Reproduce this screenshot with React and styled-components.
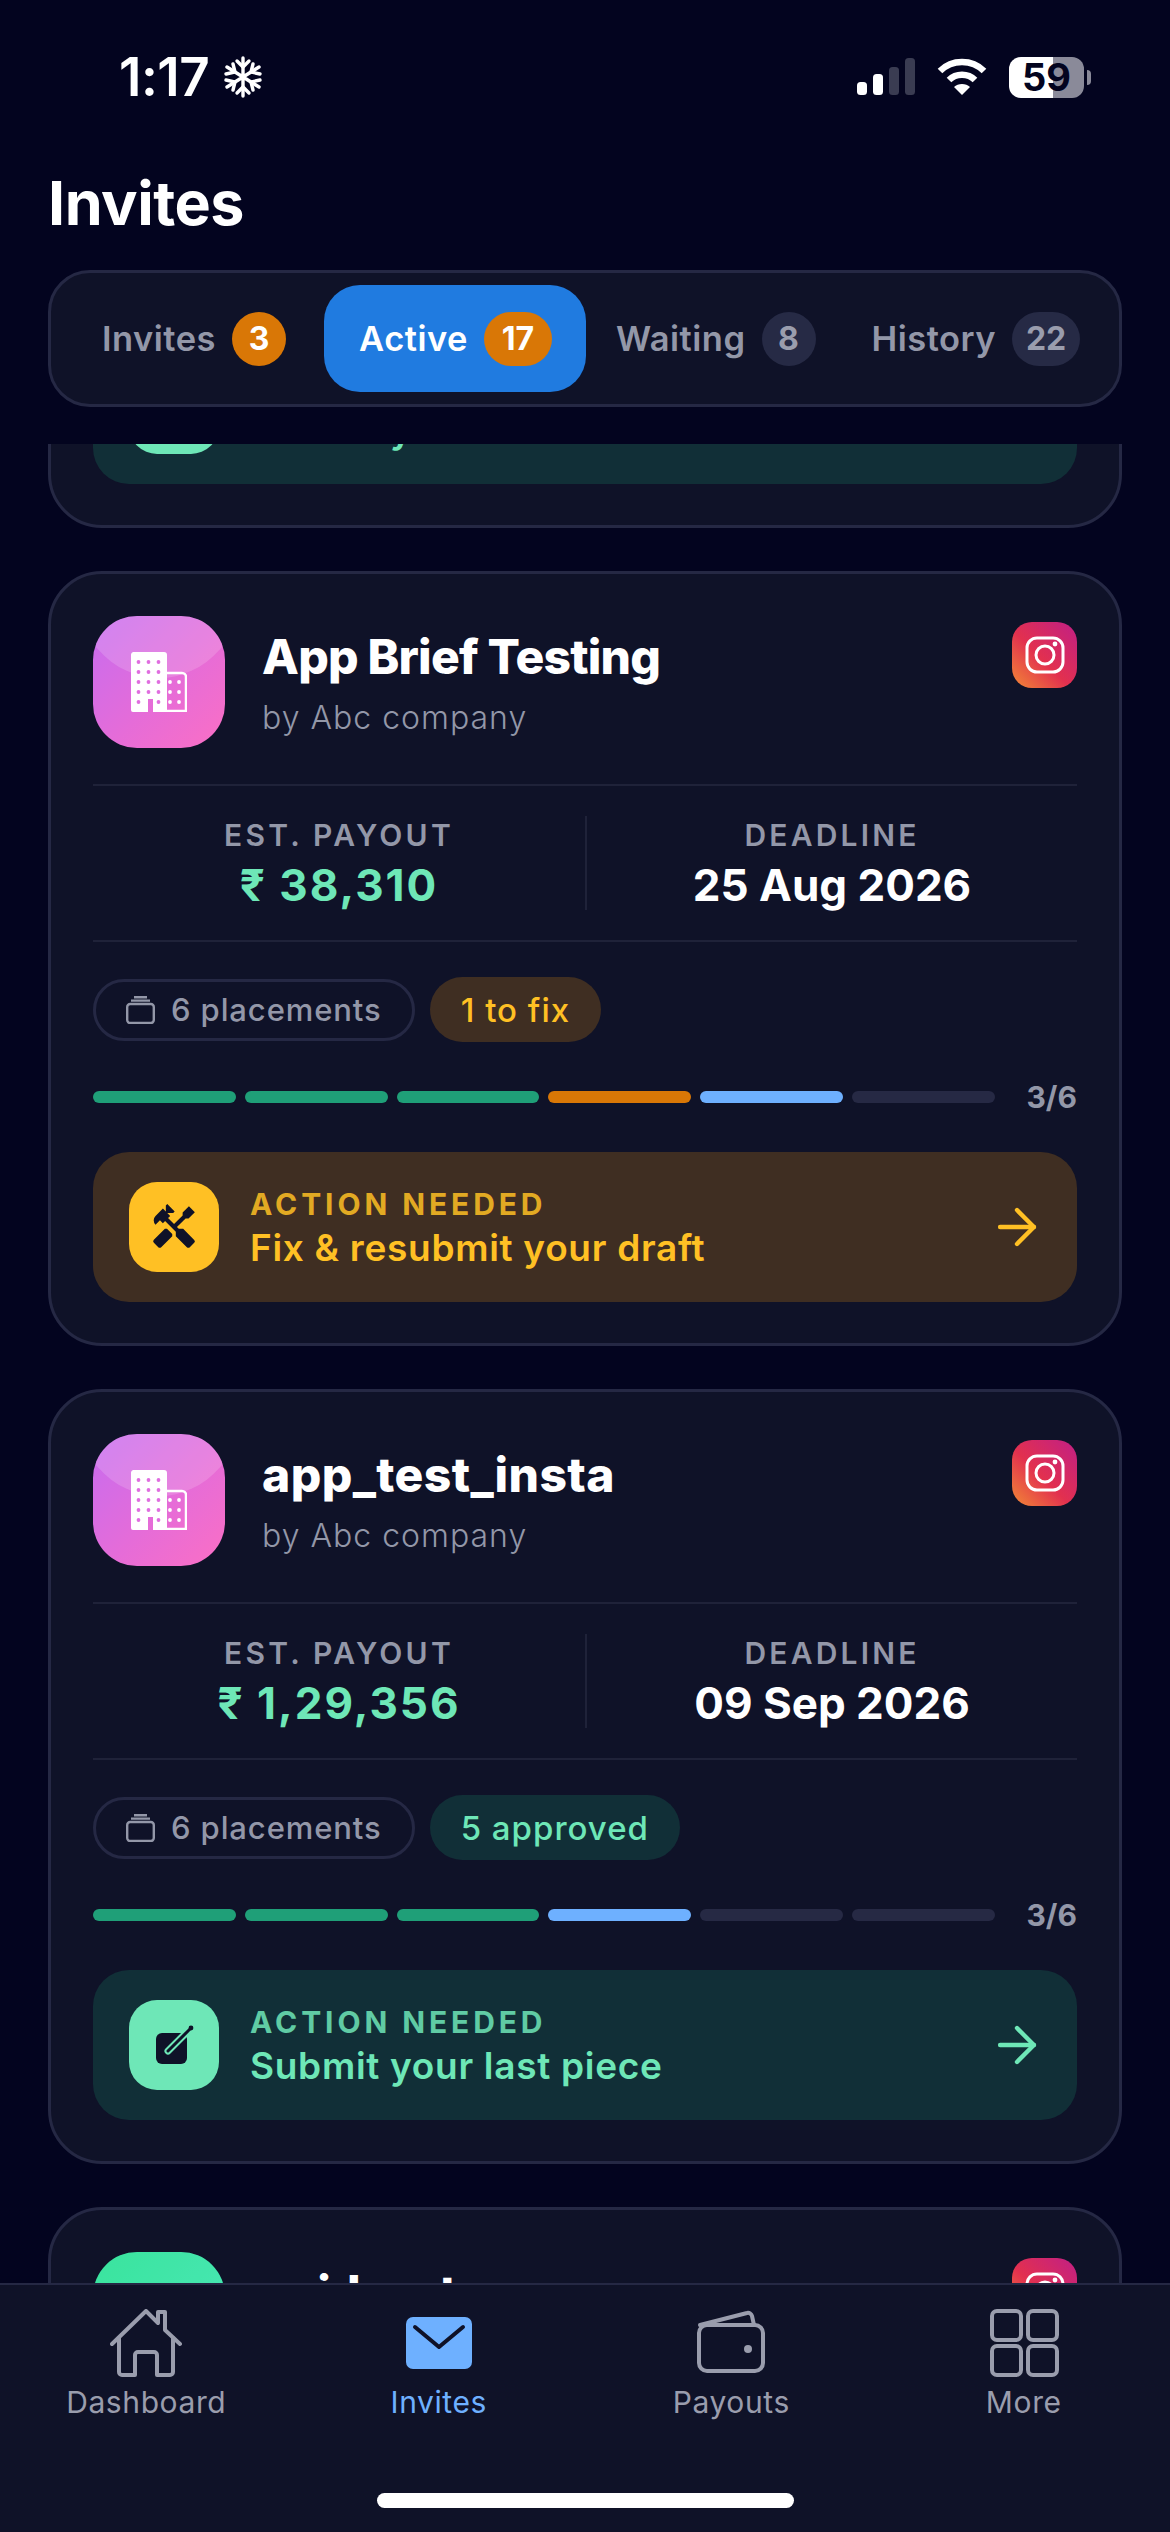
import React from 'react';
import styled, { createGlobalStyle } from 'styled-components';
import { MdHandyman } from 'react-icons/md';
import { ArrowRight } from 'lucide-react';

const GlobalStyle = createGlobalStyle`
  html, body {
    margin: 0;
    padding: 0;
    background: #03041f;
  }
  * {
    box-sizing: border-box;
  }
`;

const Screen = styled.div`
  width: 1170px;
  height: 2532px;
  display: flex;
  flex-direction: column;
  position: relative;
  overflow: hidden;
  background: #03041f;
  color: #fff;
  font-family: Inter, 'Noto Sans', sans-serif;
`;

const Header = styled.header`
  flex: none;
  height: 444px;
  padding: 0 48px;
`;

const StatusBar = styled.div`
  height: 154px;
  margin: 0 -48px;
  padding: 0 86px 0 119px;
  display: flex;
  align-items: center;
  justify-content: space-between;
`;

const Clock = styled.div`
  display: flex;
  align-items: center;
  gap: 15px;
  font-size: 53px;
  font-weight: 600;
  letter-spacing: -0.5px;
`;

const StatusIcons = styled.div`
  display: flex;
  align-items: center;
  gap: 22px;
`;

const Battery = styled.div`
  width: 75px;
  height: 41px;
  border-radius: 12px;
  display: flex;
  align-items: center;
  justify-content: center;
  position: relative;
  background: linear-gradient(90deg, #fff 0 44px, #8a8a99 44px);
  color: #03041f;
  font-size: 38px;
  font-weight: 700;

  &::after {
    content: '';
    position: absolute;
    right: -7px;
    top: 13px;
    width: 4px;
    height: 15px;
    border-radius: 0 4px 4px 0;
    background: #8a8a99;
  }
`;

const Title = styled.h1`
  margin: 0 0 20px;
  height: 96px;
  padding-top: 1px;
  line-height: 96px;
  font-size: 61px;
  font-weight: 700;
  letter-spacing: -0.5px;
`;

const Tabs = styled.nav`
  height: 137px;
  padding: 12px 0 12px 30px;
  display: flex;
  align-items: stretch;
  gap: 14px;
  border: 3px solid #252844;
  border-radius: 42px;
  background: #0f1228;
`;

const Tab = styled.div`
  display: flex;
  align-items: center;
  gap: 16px;
  margin: ${(p) => (p.$active ? '0 -5px 0 3px' : '0')};
  padding: ${(p) => (p.$active ? '0 34px 0 35px' : '0 21px')};
  border-radius: 36px;
  background: ${(p) => (p.$active ? '#207be0' : 'transparent')};
  color: ${(p) => (p.$active ? '#fff' : '#9397a8')};
  font-size: 34.5px;
  font-weight: 600;
  letter-spacing: 0.5px;
`;

const Count = styled.span`
  width: ${(p) => (p.$wide ? '68px' : '54px')};
  height: 54px;
  border-radius: 27px;
  display: flex;
  align-items: center;
  justify-content: center;
  font-size: 32px;
  font-weight: 700;
  letter-spacing: 0;
  background: ${(p) => (p.$alert ? '#d97706' : '#262a45')};
  color: ${(p) => (p.$alert ? '#fff' : '#9a9dad')};
`;

const Viewport = styled.main`
  flex: 1;
  min-height: 0;
  overflow: hidden;
  padding: 0 48px;
`;

// scrolled list, first card sits mostly above the fold
const CardList = styled.div`
  margin-top: -691px;
  display: flex;
  flex-direction: column;
  gap: 43px;
`;

const Card = styled.article`
  height: 775px;
  padding: 42px 42px 41px;
  border: 3px solid #252844;
  border-radius: 54px;
  background: #0f1228;
`;

const CardTop = styled.div`
  display: flex;
  align-items: flex-start;
  gap: 37px;
  height: 132px;
  margin-bottom: 36px;
`;

const BrandIcon = styled.div`
  flex: none;
  width: 132px;
  height: 132px;
  border-radius: 44px;
  position: relative;
  overflow: hidden;
  display: flex;
  align-items: center;
  justify-content: center;
  background: ${(p) => p.$bg};

  &::before {
    content: '';
    position: absolute;
    left: -20px;
    right: -20px;
    top: -132px;
    height: 194px;
    border-radius: 50%;
    background: rgba(255, 255, 255, 0.16);
  }

  svg {
    position: relative;
  }
`;

const Names = styled.div`
  flex: 1;
  padding-top: 11px;
`;

const CardTitle = styled.h2`
  margin: 0 0 10px;
  font-size: 48px;
  line-height: 60px;
  font-weight: 800;
  letter-spacing: ${(p) => p.$tracking || '-0.8px'};
  color: #fff;
`;

const Byline = styled.div`
  font-size: 32px;
  line-height: 42px;
  font-weight: 300;
  letter-spacing: 1px;
  color: #9397a8;
`;

const PlatformBadge = styled.div`
  flex: none;
  width: 65px;
  height: 66px;
  margin-top: 6px;
  border-radius: 20px;
  display: flex;
  align-items: center;
  justify-content: center;
  background: linear-gradient(45deg, #f28a35 0%, #e2304f 45%, #c11f86 100%);
`;

const Stats = styled.div`
  height: 158px;
  display: grid;
  grid-template-columns: 1fr 1fr;
  align-items: center;
  border-top: 2px solid #1f2239;
  border-bottom: 2px solid #1f2239;
`;

const Stat = styled.div`
  height: 94px;
  padding-top: 2px;
  display: flex;
  flex-direction: column;
  align-items: center;
  justify-content: center;
  gap: 4px;
  border-left: ${(p) => (p.$split ? '2px solid #1f2239' : 'none')};
`;

const StatLabel = styled.div`
  font-size: 30px;
  line-height: 38px;
  font-weight: 600;
  letter-spacing: 3.2px;
  color: #9397a8;
`;

const StatValue = styled.div`
  font-size: 44px;
  line-height: 54px;
  font-weight: 700;
  letter-spacing: ${(p) => (p.$money ? '2px' : '0')};
  color: ${(p) => (p.$money ? '#6ee7b7' : '#fff')};
`;

const Chips = styled.div`
  display: flex;
  align-items: center;
  gap: 15px;
  height: 65px;
  margin: 35px 0 49px;
`;

const Chip = styled.div`
  height: ${(p) => (p.$outline ? '62px' : '65px')};
  padding: ${(p) => (p.$outline ? '0 30px' : '0 31px')};
  display: flex;
  align-items: center;
  gap: 16px;
  border-radius: 33px;
  border: ${(p) => (p.$outline ? '3px solid #252844' : 'none')};
  background: ${(p) => (p.$outline ? 'transparent' : p.$bg)};
  color: ${(p) => (p.$outline ? '#9397a8' : p.$fg)};
  font-size: ${(p) => (p.$outline ? '31px' : '33px')};
  font-weight: 500;
  letter-spacing: ${(p) => (p.$outline ? '0.9px' : '1px')};
`;

const Progress = styled.div`
  height: 12px;
  display: flex;
  align-items: center;
  margin-bottom: 49px;
`;

const Segments = styled.div`
  flex: 1;
  display: flex;
  gap: 9px;
`;

const Segment = styled.span`
  flex: 1;
  height: 12px;
  border-radius: 6px;
  background: ${(p) => p.$color};
`;

const ProgressLabel = styled.span`
  margin-left: 32px;
  font-size: 30px;
  font-weight: 700;
  color: #9397a8;
`;

const Action = styled.div`
  height: 150px;
  padding: 0 31px 0 36px;
  display: flex;
  align-items: center;
  gap: 31px;
  border-radius: 36px;
  background: ${(p) => p.$bg};
  color: ${(p) => p.$fg};
`;

const ActionIcon = styled.div`
  flex: none;
  width: 90px;
  height: 90px;
  border-radius: 28px;
  display: flex;
  align-items: center;
  justify-content: center;
  background: ${(p) => p.$fg};
  color: #0f1228;
`;

// hammer head on the left, wrench on the right
const ToolsIcon = styled(MdHandyman)`
  transform: scaleX(-1);
`;

const ActionText = styled.div`
  flex: 1;
`;

const ActionLabel = styled.div`
  font-size: 30px;
  line-height: 40px;
  font-weight: 700;
  letter-spacing: 3.9px;
  opacity: 0.85;
`;

const ActionTitle = styled.div`
  margin-top: 1px;
  font-size: 37px;
  line-height: 46px;
  font-weight: 600;
  letter-spacing: 0.7px;
`;

const BottomNav = styled.nav`
  flex: none;
  height: 249px;
  padding-top: 24px;
  display: grid;
  grid-template-columns: repeat(4, 1fr);
  align-items: start;
  border-top: 2px solid #252844;
  background: #0f1228;
`;

const NavItem = styled.div`
  display: flex;
  flex-direction: column;
  align-items: center;
  gap: 5px;
  color: ${(p) => (p.$active ? '#6eb0ff' : '#9a9dad')};
  font-size: 30px;
  line-height: 40px;
  font-weight: 400;
  letter-spacing: 0.6px;

  svg {
    display: block;
  }
`;

const HomeBar = styled.div`
  position: absolute;
  left: 377px;
  bottom: 24px;
  width: 417px;
  height: 15px;
  border-radius: 8px;
  background: #fff;
`;

const Snowflake = () => (
  <svg width="38" height="42" viewBox="0 0 38 42" fill="none" stroke="#fff" strokeWidth="3.4" strokeLinecap="round">
    <path d="M19 2v38M3 11l32 20M35 11L3 31" />
    <path d="M13 5l6 6 6-6M13 37l6-6 6 6" />
    <path d="M2 18l9-2-2-8M36 18l-9-2 2-8M2 24l9 2-2 8M36 24l-9 2 2 8" />
  </svg>
);

const Signal = () => (
  <svg width="58" height="38" viewBox="0 0 58 38">
    <rect x="0" y="24" width="10" height="13" rx="3.5" fill="#fff" />
    <rect x="16" y="16" width="10" height="21" rx="3.5" fill="#fff" />
    <rect x="32" y="9" width="10" height="28" rx="3.5" fill="#3a3c52" />
    <rect x="48" y="0" width="10" height="37" rx="3.5" fill="#3a3c52" />
  </svg>
);

const Wifi = () => (
  <svg width="50" height="38" viewBox="0 0 50 38" fill="none" stroke="#fff" strokeWidth="6.5">
    <path d="M3 13C15 1 35 1 47 13" />
    <path d="M12 22c7-7 19-7 26 0" />
    <path d="M25 37l-8-8c4-4 12-4 16 0z" fill="#fff" stroke="none" />
  </svg>
);

const Building = ({ tint }) => (
  <svg width="56" height="60" viewBox="0 0 56 60">
    <path d="M2 0h31a3 3 0 0 1 3 3v57H22V47h-5v13H2a2 2 0 0 1-2-2V3a3 3 0 0 1 2-3z" fill="#fff" />
    <path d="M36 21h15a4 4 0 0 1 4 4v34H36" fill="none" stroke="#fff" strokeWidth="2.5" />
    <path d="M36 58h19v2H36z" fill="#fff" />
    {[0, 1, 2, 3, 4].flatMap((row) =>
      [0, 1, 2].map((col) =>
        row === 4 && col === 1 ? null : (
          <circle key={`${row}-${col}`} cx={7.5 + col * 10} cy={10 + row * 10} r="1.9" fill={tint} />
        ),
      ),
    )}
    {[0, 1, 2].flatMap((row) =>
      [0, 1].map((col) => (
        <circle key={`s${row}-${col}`} cx={39 + col * 9} cy={30 + row * 10} r="1.9" fill="#fff" />
      )),
    )}
  </svg>
);

const Instagram = () => (
  <svg width="40" height="38" viewBox="0 0 40 38" fill="none" stroke="#fff" strokeWidth="3">
    <rect x="2" y="2" width="36" height="34" rx="10" />
    <circle cx="20" cy="19" r="9" />
    <circle cx="30" cy="8" r="2.4" fill="#fff" stroke="none" />
  </svg>
);

const Stack = () => (
  <svg width="29" height="28" viewBox="0 0 29 28" fill="none" stroke="#9397a8" strokeWidth="2.4">
    <rect x="1.2" y="8" width="26.6" height="19" rx="3" />
    <path d="M5 4.6h19M8 1.2h13" />
  </svg>
);

const EditNote = () => (
  <svg width="44" height="44" viewBox="0 0 44 44" fill="none" strokeLinecap="round">
    <rect x="4" y="10" width="31" height="31" rx="6" fill="#0f1228" />
    <path d="M16 28L33 11" stroke="#6ee7b7" strokeWidth="7" />
    <path d="M16 28L38 6" stroke="#0f1228" strokeWidth="3" />
    <circle cx="39" cy="5" r="2.4" fill="#0f1228" />
  </svg>
);

const HomeIcon = () => (
  <svg width="72" height="68" viewBox="0 0 72 68" fill="none" stroke="currentColor" strokeWidth="4" strokeLinejoin="round" strokeLinecap="round">
    <path d="M2 35L36 2l12 12V3h7v18l15 14" />
    <path d="M9 29v34a3 3 0 0 0 3 3h13V46a3 3 0 0 1 3-3h16a3 3 0 0 1 3 3v20h13a3 3 0 0 0 3-3V29" />
  </svg>
);

const MailIcon = () => (
  <svg width="72" height="68" viewBox="0 0 72 68">
    <rect x="3" y="8" width="66" height="52" rx="7" fill="#6eb0ff" />
    <path d="M12 18l24 20 24-20" fill="none" stroke="#0f1228" strokeWidth="4" strokeLinecap="round" strokeLinejoin="round" />
  </svg>
);

const WalletIcon = () => (
  <svg width="72" height="68" viewBox="0 0 72 68" fill="none" stroke="currentColor" strokeWidth="4" strokeLinejoin="round" strokeLinecap="round">
    <path d="M5 16L52 4a4 4 0 0 1 5 3l2 9" />
    <rect x="4" y="16" width="64" height="46" rx="8" />
    <circle cx="53" cy="40" r="4" fill="currentColor" stroke="none" />
  </svg>
);

const GridIcon = () => (
  <svg width="72" height="68" viewBox="0 0 72 68" fill="none" stroke="currentColor" strokeWidth="4">
    <rect x="4" y="2" width="29" height="29" rx="5" />
    <rect x="40" y="2" width="29" height="29" rx="5" />
    <rect x="4" y="37" width="29" height="29" rx="5" />
    <rect x="40" y="37" width="29" height="29" rx="5" />
  </svg>
);

const green = '#6ee7b7';
const greenBg = '#112f37';
const amber = '#ffc024';
const amberBg = '#3f2e22';

const pink = 'linear-gradient(135deg, #c66cf0 0%, #e56cd8 55%, #fb6fc4 100%)';
const mint = 'linear-gradient(135deg, #14de8a 0%, #2ce6b0 100%)';

const done = '#1f9f78';
const fix = '#d97706';
const current = '#6eb0ff';
const todo = '#262944';

const tabs = [
  { name: 'Invites', count: 3, alert: true },
  { name: 'Active', count: 17, alert: true, active: true },
  { name: 'Waiting', count: 8 },
  { name: 'History', count: 22 },
];

const cards = [
  {
    title: 'Summer_reel',
    icon: pink,
    tint: '#e06ee0',
    payout: '₹ 64,200',
    deadline: '02 Aug 2026',
    status: { text: '5 approved', fg: green, bg: greenBg },
    steps: [done, done, done, current, todo, todo],
    action: { fg: green, bg: greenBg, title: 'Submit your draft', kind: 'submit' },
  },
  {
    title: 'App Brief Testing',
    icon: pink,
    tint: '#e06ee0',
    payout: '₹ 38,310',
    deadline: '25 Aug 2026',
    status: { text: '1 to fix', fg: amber, bg: amberBg },
    steps: [done, done, done, fix, current, todo],
    action: { fg: amber, bg: amberBg, title: 'Fix & resubmit your draft', kind: 'fix' },
  },
  {
    title: 'app_test_insta',
    tracking: '0.4px',
    icon: pink,
    tint: '#e06ee0',
    payout: '₹ 1,29,356',
    deadline: '09 Sep 2026',
    status: { text: '5 approved', fg: green, bg: greenBg },
    steps: [done, done, done, current, todo, todo],
    action: { fg: green, bg: greenBg, title: 'Submit your last piece', kind: 'submit' },
  },
  {
    title: 'avideo_tour',
    tracking: '-0.8px',
    icon: mint,
    tint: '#3be9ac',
    payout: '₹ 12,400',
    deadline: '14 Sep 2026',
    status: { text: '5 approved', fg: green, bg: greenBg },
    steps: [done, done, current, todo, todo, todo],
    action: { fg: green, bg: greenBg, title: 'Submit your last piece', kind: 'submit' },
  },
];

const navItems = [
  { label: 'Dashboard', Icon: HomeIcon },
  { label: 'Invites', Icon: MailIcon, active: true },
  { label: 'Payouts', Icon: WalletIcon },
  { label: 'More', Icon: GridIcon },
];

const InviteCard = ({ card }) => (
  <Card>
    <CardTop>
      <BrandIcon $bg={card.icon}>
        <Building tint={card.tint} />
      </BrandIcon>
      <Names>
        <CardTitle $tracking={card.tracking}>{card.title}</CardTitle>
        <Byline>by Abc company</Byline>
      </Names>
      <PlatformBadge>
        <Instagram />
      </PlatformBadge>
    </CardTop>

    <Stats>
      <Stat>
        <StatLabel>EST. PAYOUT</StatLabel>
        <StatValue $money>{card.payout}</StatValue>
      </Stat>
      <Stat $split>
        <StatLabel>DEADLINE</StatLabel>
        <StatValue>{card.deadline}</StatValue>
      </Stat>
    </Stats>

    <Chips>
      <Chip $outline>
        <Stack />
        6 placements
      </Chip>
      <Chip $bg={card.status.bg} $fg={card.status.fg}>{card.status.text}</Chip>
    </Chips>

    <Progress>
      <Segments>
        {card.steps.map((color, i) => (
          <Segment key={i} $color={color} />
        ))}
      </Segments>
      <ProgressLabel>3/6</ProgressLabel>
    </Progress>

    <Action $bg={card.action.bg} $fg={card.action.fg}>
      <ActionIcon $fg={card.action.fg}>
        {card.action.kind === 'fix' ? <ToolsIcon size={50} /> : <EditNote />}
      </ActionIcon>
      <ActionText>
        <ActionLabel>ACTION NEEDED</ActionLabel>
        <ActionTitle>{card.action.title}</ActionTitle>
      </ActionText>
      <ArrowRight size={58} strokeWidth={1.8} />
    </Action>
  </Card>
);

const App = () => (
  <Screen>
    <GlobalStyle />
    <Header>
      <StatusBar>
        <Clock>
          1:17
          <Snowflake />
        </Clock>
        <StatusIcons>
          <Signal />
          <Wifi />
          <Battery>59</Battery>
        </StatusIcons>
      </StatusBar>
      <Title>Invites</Title>
      <Tabs>
        {tabs.map((tab) => (
          <Tab key={tab.name} $active={tab.active}>
            {tab.name}
            <Count $alert={tab.alert} $wide={tab.count > 9}>{tab.count}</Count>
          </Tab>
        ))}
      </Tabs>
    </Header>

    <Viewport>
      <CardList>
        {cards.map((card) => (
          <InviteCard key={card.title} card={card} />
        ))}
      </CardList>
    </Viewport>

    <BottomNav>
      {navItems.map(({ label, Icon, active }) => (
        <NavItem key={label} $active={active}>
          <Icon />
          {label}
        </NavItem>
      ))}
    </BottomNav>
    <HomeBar />
  </Screen>
);

export default App;
